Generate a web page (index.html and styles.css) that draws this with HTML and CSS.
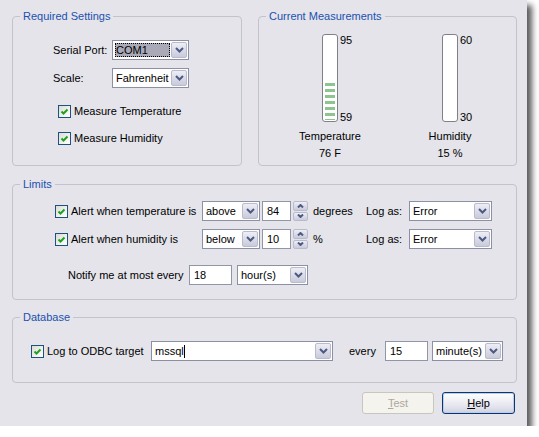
FILE: index.html
```html
<!DOCTYPE html>
<html lang="en">
  <head>
    <meta charset="UTF-8" />
    <title>Monitor Settings</title>
    <link rel="stylesheet" href="styles.css">
  </head>
  <body>
    <div class="dialog">
      <div class="top">
        <fieldset class="group settings">
          <legend>Required Settings</legend>
          <div class="group-body">
            <div class="row">
              <span class="lbl">Serial Port:</span>
              <div class="combo focus w-com">
                <span class="combo-text"><span class="sel">COM1</span></span>
                <span class="combo-btn"><svg width="9" height="6" viewBox="0 0 9 6"><polyline points="1,1 4.5,4.5 8,1" /></svg></span>
              </div>
            </div>
            <div class="row">
              <span class="lbl">Scale:</span>
              <div class="combo w-com">
                <span class="combo-text">Fahrenheit</span>
                <span class="combo-btn"><svg width="9" height="6" viewBox="0 0 9 6"><polyline points="1,1 4.5,4.5 8,1" /></svg></span>
              </div>
            </div>
            <div class="checks">
              <label class="check"><span class="box"><svg width="9" height="9" viewBox="0 0 9 9"><polyline points="1.5,4.5 3.5,6.5 7.5,2.5" /></svg></span>Measure Temperature</label>
              <label class="check"><span class="box"><svg width="9" height="9" viewBox="0 0 9 9"><polyline points="1.5,4.5 3.5,6.5 7.5,2.5" /></svg></span>Measure Humidity</label>
            </div>
          </div>
        </fieldset>

        <fieldset class="group measure">
          <legend>Current Measurements</legend>
          <div class="group-body gauges">
            <div class="gauge">
              <div class="gauge-body">
                <div class="bar"><div class="fill" style="height: 47%"></div></div>
                <div class="scale"><span>95</span><span>59</span></div>
              </div>
              <div class="gauge-name">Temperature</div>
              <div class="gauge-value">76 F</div>
            </div>
            <div class="gauge">
              <div class="gauge-body">
                <div class="bar"></div>
                <div class="scale"><span>60</span><span>30</span></div>
              </div>
              <div class="gauge-name">Humidity</div>
              <div class="gauge-value">15 %</div>
            </div>
          </div>
        </fieldset>
      </div>

      <fieldset class="group limits">
        <legend>Limits</legend>
        <div class="group-body">
          <div class="row">
            <label class="check w-alert"><span class="box"><svg width="9" height="9" viewBox="0 0 9 9"><polyline points="1.5,4.5 3.5,6.5 7.5,2.5" /></svg></span>Alert when temperature is</label>
            <div class="combo w-dir">
              <span class="combo-text">above</span>
              <span class="combo-btn"><svg width="9" height="6" viewBox="0 0 9 6"><polyline points="1,1 4.5,4.5 8,1" /></svg></span>
            </div>
            <div class="field w-num">84</div>
            <div class="spin">
              <span class="spin-btn"><svg width="7" height="4" viewBox="0 0 7 4"><polyline points="1,3.5 3.5,1 6,3.5" /></svg></span>
              <span class="spin-btn"><svg width="7" height="4" viewBox="0 0 7 4"><polyline points="1,0.5 3.5,3 6,0.5" /></svg></span>
            </div>
            <span class="unit">degrees</span>
            <span class="log-lbl">Log as:</span>
            <div class="combo w-log">
              <span class="combo-text">Error</span>
              <span class="combo-btn"><svg width="9" height="6" viewBox="0 0 9 6"><polyline points="1,1 4.5,4.5 8,1" /></svg></span>
            </div>
          </div>
          <div class="row">
            <label class="check w-alert"><span class="box"><svg width="9" height="9" viewBox="0 0 9 9"><polyline points="1.5,4.5 3.5,6.5 7.5,2.5" /></svg></span>Alert when humidity is</label>
            <div class="combo w-dir">
              <span class="combo-text">below</span>
              <span class="combo-btn"><svg width="9" height="6" viewBox="0 0 9 6"><polyline points="1,1 4.5,4.5 8,1" /></svg></span>
            </div>
            <div class="field w-num">10</div>
            <div class="spin">
              <span class="spin-btn"><svg width="7" height="4" viewBox="0 0 7 4"><polyline points="1,3.5 3.5,1 6,3.5" /></svg></span>
              <span class="spin-btn"><svg width="7" height="4" viewBox="0 0 7 4"><polyline points="1,0.5 3.5,3 6,0.5" /></svg></span>
            </div>
            <span class="unit">%</span>
            <span class="log-lbl">Log as:</span>
            <div class="combo w-log">
              <span class="combo-text">Error</span>
              <span class="combo-btn"><svg width="9" height="6" viewBox="0 0 9 6"><polyline points="1,1 4.5,4.5 8,1" /></svg></span>
            </div>
          </div>
          <div class="row notify">
            <span class="notify-lbl">Notify me at most every</span>
            <div class="field w-every">18</div>
            <div class="combo w-period">
              <span class="combo-text">hour(s)</span>
              <span class="combo-btn"><svg width="9" height="6" viewBox="0 0 9 6"><polyline points="1,1 4.5,4.5 8,1" /></svg></span>
            </div>
          </div>
        </div>
      </fieldset>

      <fieldset class="group database">
        <legend>Database</legend>
        <div class="group-body">
          <div class="row">
            <label class="check w-odbc"><span class="box"><svg width="9" height="9" viewBox="0 0 9 9"><polyline points="1.5,4.5 3.5,6.5 7.5,2.5" /></svg></span>Log to ODBC target</label>
            <div class="combo w-target">
              <span class="combo-text">mssql<span class="caret"></span></span>
              <span class="combo-btn"><svg width="9" height="6" viewBox="0 0 9 6"><polyline points="1,1 4.5,4.5 8,1" /></svg></span>
            </div>
            <span class="every-lbl">every</span>
            <div class="field w-every">15</div>
            <div class="combo w-period">
              <span class="combo-text">minute(s)</span>
              <span class="combo-btn"><svg width="9" height="6" viewBox="0 0 9 6"><polyline points="1,1 4.5,4.5 8,1" /></svg></span>
            </div>
          </div>
        </div>
      </fieldset>

      <div class="buttons">
        <button class="btn" disabled><u>T</u>est</button>
        <button class="btn default"><u>H</u>elp</button>
      </div>
    </div>
  </body>
</html>
```

FILE: styles.css
```css
* {
  box-sizing: border-box;
}
body {
  margin: 0;
  background: #fff;
  font-family: "Liberation Sans", Arial, sans-serif;
  font-size: 11px;
  color: #000;
}
.dialog {
  width: 527px;
  height: 426px;
  padding: 10px 10px 0 12px;
  background: #e4e4ea;
  box-shadow: 5px 5px 6px rgba(0, 0, 0, 0.65);
}
.top {
  display: flex;
  gap: 16px;
}

/* group boxes */
.group {
  margin: 0;
  padding: 0;
  border: 1px solid #c3c3cb;
  border-radius: 4px;
  min-width: 0;
}
.group legend {
  margin-left: 7px;
  padding: 0 3px;
  line-height: 13px;
  color: #2150b0;
}
.settings {
  width: 230px;
  height: 156px;
}
.measure {
  width: 259px;
  height: 156px;
}
.limits {
  margin-top: 12px;
  height: 122px;
}
.database {
  margin-top: 11px;
  height: 72px;
}
.settings .group-body {
  padding: 17px 0 0 40px;
}
.limits .group-body {
  padding: 10px 0 0 42px;
}
.database .group-body {
  padding: 17px 0 0 18px;
}

.row {
  display: flex;
  align-items: center;
  height: 20px;
  margin-bottom: 8px;
}
.lbl {
  width: 59px;
}
.checks {
  margin-top: 13px;
  padding-left: 5px;
}
.checks .check {
  height: 20px;
  margin-bottom: 7px;
}

/* checkbox */
.check {
  display: flex;
  align-items: center;
  white-space: nowrap;
}
.box {
  display: flex;
  align-items: center;
  justify-content: center;
  width: 13px;
  height: 13px;
  margin-right: 3px;
  border: 1px solid #1c5180;
  background: linear-gradient(135deg, #dcdcd5, #fff);
}
.box polyline {
  fill: none;
  stroke: #21a121;
  stroke-width: 2;
}

/* combo boxes */
.combo {
  display: flex;
  height: 20px;
  padding: 1px;
  border: 1px solid #8c90a4;
  background: #fff;
}
.combo-text {
  flex: 1;
  display: flex;
  align-items: center;
  padding-left: 2px;
  white-space: nowrap;
  overflow: hidden;
}
.combo.focus .combo-text {
  padding: 1px;
}
.sel {
  display: flex;
  align-items: center;
  height: 100%;
  width: 100%;
  padding-left: 1px;
  background: #a9a9b8;
  outline: 1px dotted #000;
  outline-offset: -1px;
}
.combo-btn {
  display: flex;
  align-items: center;
  justify-content: center;
  width: 16px;
  border: 1px solid #b9bacb;
  border-radius: 2px;
  background: linear-gradient(#eeeef6, #c9cadb);
}
.combo-btn polyline,
.spin-btn polyline {
  fill: none;
  stroke: #4d5a82;
  stroke-width: 2;
}
.caret {
  display: inline-block;
  width: 1px;
  height: 13px;
  background: #000;
}

/* text fields and spinners */
.field {
  display: flex;
  align-items: center;
  height: 20px;
  padding-left: 4px;
  border: 1px solid #8f96a8;
  background: #fff;
}
.spin {
  display: flex;
  flex-direction: column;
  gap: 1px;
  width: 15px;
  height: 20px;
  margin-left: 2px;
}
.spin-btn {
  flex: 1;
  display: flex;
  align-items: center;
  justify-content: center;
  border: 1px solid #b9bacb;
  border-radius: 2px;
  background: linear-gradient(#eeeef6, #c9cadb);
}

/* widths of the controls */
.w-com {
  width: 77px;
}
.w-alert {
  width: 147px;
}
.w-dir {
  width: 58px;
}
.w-num {
  width: 29px;
  margin-left: 2px;
}
.w-log {
  width: 83px;
}
.w-every {
  width: 43px;
}
.w-period {
  width: 71px;
  margin-left: 5px;
}
.w-odbc {
  width: 120px;
}
.w-target {
  width: 182px;
}
.unit {
  width: 53px;
  margin-left: 5px;
}
.log-lbl {
  width: 43px;
}
.notify {
  margin-top: 16px;
}
.notify-lbl {
  width: 121px;
  margin-left: 13px;
}
.every-lbl {
  width: 36px;
  margin-left: 16px;
}
.database .w-period {
  margin-left: 4px;
}

/* gauges */
.gauges {
  display: grid;
  grid-template-columns: 120px 120px;
  padding: 11px 0 0 11px;
}
.gauge {
  display: flex;
  flex-direction: column;
  align-items: center;
}
.gauge-body {
  display: grid;
  grid-template-columns: 1fr 16px 1fr;
  width: 100%;
  height: 90px;
}
.bar {
  grid-column: 2;
  display: flex;
  flex-direction: column;
  justify-content: flex-end;
  height: 88px;
  padding: 0 2px 1px;
  border: 1px solid #808088;
  border-radius: 3px;
  background: #fff;
}
.fill {
  background: repeating-linear-gradient(to bottom, transparent 0, transparent 3px, #8ec48e 3px, #8ec48e 6px);
}
.scale {
  display: flex;
  flex-direction: column;
  justify-content: space-between;
  padding-left: 2px;
  line-height: 13px;
}
.gauge-name {
  margin-top: 6px;
  line-height: 13px;
}
.gauge-value {
  margin-top: 4px;
  line-height: 13px;
}

/* buttons */
.buttons {
  display: flex;
  justify-content: flex-end;
  gap: 8px;
  margin-top: 9px;
  padding-right: 2px;
}
.btn {
  width: 73px;
  height: 22px;
  padding: 0;
  font: inherit;
  border: 1px solid #003c74;
  border-radius: 3px;
  background: linear-gradient(#ffffff, #e3e3ee 70%, #cfd0df);
  color: #000;
}
.btn.default {
  box-shadow: inset 0 0 0 1px #c5c9e6;
}
.btn:disabled {
  width: 72px;
  border-color: #c9c7ba;
  background: #f4f3ee;
  color: #aca899;
}
```
